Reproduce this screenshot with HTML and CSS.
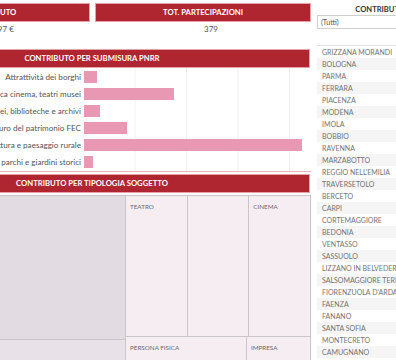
FILE: index.html
```html
<!DOCTYPE html>
<html lang="it">
<head>
    <meta charset="UTF-8">
    <meta name="viewport" content="width=device-width, initial-scale=1.0">
    <title>Contributi PNRR</title>
    <link rel="stylesheet" href="styles.css">
</head>
<body>
    <div class="dashboard">
        <div class="main">
            <div class="kpis">
                <div class="kpi">
                    <div class="head">TOT. CONTRIBUTO</div>
                    <div class="kpi-value">14.325.097 €</div>
                </div>
                <div class="kpi">
                    <div class="head">TOT. PARTECIPAZIONI</div>
                    <div class="kpi-value">379</div>
                </div>
            </div>

            <div class="head chart-head">CONTRIBUTO PER SUBMISURA PNRR</div>
            <div class="bars">
                <div class="bar-labels">
                    <div class="bar-label"><span>Attrattività dei borghi</span></div>
                    <div class="bar-label"><span>Sicurezza sismica cinema, teatri musei</span></div>
                    <div class="bar-label"><span>Rimozione barriere in musei, biblioteche e archivi</span></div>
                    <div class="bar-label"><span>Protezione e restauro del patrimonio FEC</span></div>
                    <div class="bar-label"><span>Architettura e paesaggio rurale</span></div>
                    <div class="bar-label"><span>Tutela e valorizzazione parchi e giardini storici</span></div>
                </div>
                <div class="plot">
                    <div class="bar-row"><div class="bar" style="width: 13px"></div></div>
                    <div class="bar-row"><div class="bar" style="width: 90px"></div></div>
                    <div class="bar-row"><div class="bar" style="width: 16px"></div></div>
                    <div class="bar-row"><div class="bar" style="width: 43px"></div></div>
                    <div class="bar-row"><div class="bar" style="width: 218px"></div></div>
                    <div class="bar-row"><div class="bar" style="width: 9px"></div></div>
                </div>
            </div>

            <div class="head chart-head tree-head">CONTRIBUTO PER TIPOLOGIA SOGGETTO</div>
            <div class="treemap">
                <div class="tree-col">
                    <div class="cell dark big"></div>
                    <div class="cell mid"></div>
                </div>
                <div class="tree-group">
                    <div class="tree-row top">
                        <div class="cell">TEATRO</div>
                        <div class="cell"></div>
                        <div class="cell">CINEMA</div>
                    </div>
                    <div class="tree-row bottom">
                        <div class="cell wide">PERSONA FISICA</div>
                        <div class="cell">IMPRESA</div>
                    </div>
                </div>
            </div>
        </div>

        <div class="side">
            <div class="side-title">CONTRIBUTO PER COMUNE</div>
            <div class="dropdown">(Tutti)</div>
            <ul class="comuni">
                <li>GRIZZANA MORANDI</li>
                <li>BOLOGNA</li>
                <li>PARMA</li>
                <li>FERRARA</li>
                <li>PIACENZA</li>
                <li>MODENA</li>
                <li>IMOLA</li>
                <li>BOBBIO</li>
                <li>RAVENNA</li>
                <li>MARZABOTTO</li>
                <li>REGGIO NELL'EMILIA</li>
                <li>TRAVERSETOLO</li>
                <li>BERCETO</li>
                <li>CARPI</li>
                <li>CORTEMAGGIORE</li>
                <li>BEDONIA</li>
                <li>VENTASSO</li>
                <li>SASSUOLO</li>
                <li>LIZZANO IN BELVEDERE</li>
                <li>SALSOMAGGIORE TERME</li>
                <li>FIORENZUOLA D'ARDA</li>
                <li>FAENZA</li>
                <li>FANANO</li>
                <li>SANTA SOFIA</li>
                <li>MONTECRETO</li>
                <li>CAMUGNANO</li>
            </ul>
        </div>
    </div>
</body>
</html>
```

FILE: styles.css
```css
body {
    margin: 0;
    font-family: Lato, "Open Sans", sans-serif;
    background: white;
    overflow: hidden;
    height: 360px;
}
.dashboard {
    display: flex;
    gap: 6px;
    margin-left: -126px;
}
.main {
    width: 437px;
    flex-shrink: 0;
}
.head {
    background: #af2530;
    border: 1px solid #e5a2a8;
    color: white;
    font-weight: bold;
    font-size: 7.7px;
    height: 17px;
    line-height: 17px;
    text-align: center;
    white-space: nowrap;
}
.kpis {
    display: grid;
    grid-template-columns: 216px 216px;
    gap: 5px;
    margin-top: 3px;
}
.kpi-value {
    font-size: 8px;
    color: #555;
    text-align: center;
    padding-left: 16px;
    height: 14px;
    line-height: 14px;
    white-space: nowrap;
}
.chart-head {
    margin-top: 13px;
    width: 434px;
}
.bars {
    display: flex;
    height: 103px;
    border-bottom: 1px solid #e8b4b8;
}
.bar-labels {
    width: 207px;
    margin-right: 3px;
    display: flex;
    flex-direction: column;
}
.bar-label {
    height: 17px;
    display: flex;
    justify-content: flex-end;
    align-items: center;
    font-size: 8.1px;
    color: #555;
    white-space: nowrap;
    overflow: hidden;
}
.plot {
    flex: 1;
    display: flex;
    flex-direction: column;
    background-image: linear-gradient(to right, transparent 51px, #f0f0f0 51px);
    background-size: 51.5px 100%;
}
.bar-row {
    height: 17px;
    display: flex;
    align-items: center;
}
.bar {
    height: 12px;
    background: #e898b3;
}
.tree-head {
    margin-top: 2px;
}
.treemap {
    margin-top: 2px;
    display: flex;
    gap: 1px;
    background: #c9c5c8;
    padding: 1px;
    height: 200px;
    width: 435px;
}
.tree-col {
    width: 250px;
    display: flex;
    flex-direction: column;
    gap: 1px;
}
.tree-group {
    flex: 1;
    display: flex;
    flex-direction: column;
    gap: 1px;
}
.tree-row {
    display: flex;
    gap: 1px;
}
.tree-row.top {
    height: 140px;
}
.tree-row.bottom {
    flex: 1;
}
.cell {
    flex: 1;
    background: #f6edf3;
    font-size: 6.3px;
    color: #6a6a6a;
    padding: 7px 4px;
    white-space: nowrap;
    overflow: hidden;
}
.cell.wide {
    flex: 2.03;
}
.cell.big {
    flex: none;
    height: 143px;
    padding: 0;
}
.cell.dark {
    background: #e2dbe2;
}
.cell.mid {
    background: #e9e1e8;
}
.side {
    width: 178px;
    flex-shrink: 0;
}
.side-title {
    font-size: 7.6px;
    font-weight: bold;
    color: #333;
    text-align: center;
    margin-top: 4px;
    white-space: nowrap;
}
.dropdown {
    margin-top: 1px;
    height: 12px;
    line-height: 12px;
    border: 1px solid #cfcfcf;
    font-size: 7px;
    color: #555;
    padding-left: 3px;
}
.comuni {
    list-style: none;
    margin: 16px 0 0;
    padding: 0;
    border-top: 1px solid #e4e4e4;
}
.comuni li {
    height: 12px;
    line-height: 12px;
    padding-left: 5px;
    font-size: 7px;
    color: #737373;
    white-space: nowrap;
}
.comuni li:nth-child(even) {
    background: #f5f5f5;
}
```
